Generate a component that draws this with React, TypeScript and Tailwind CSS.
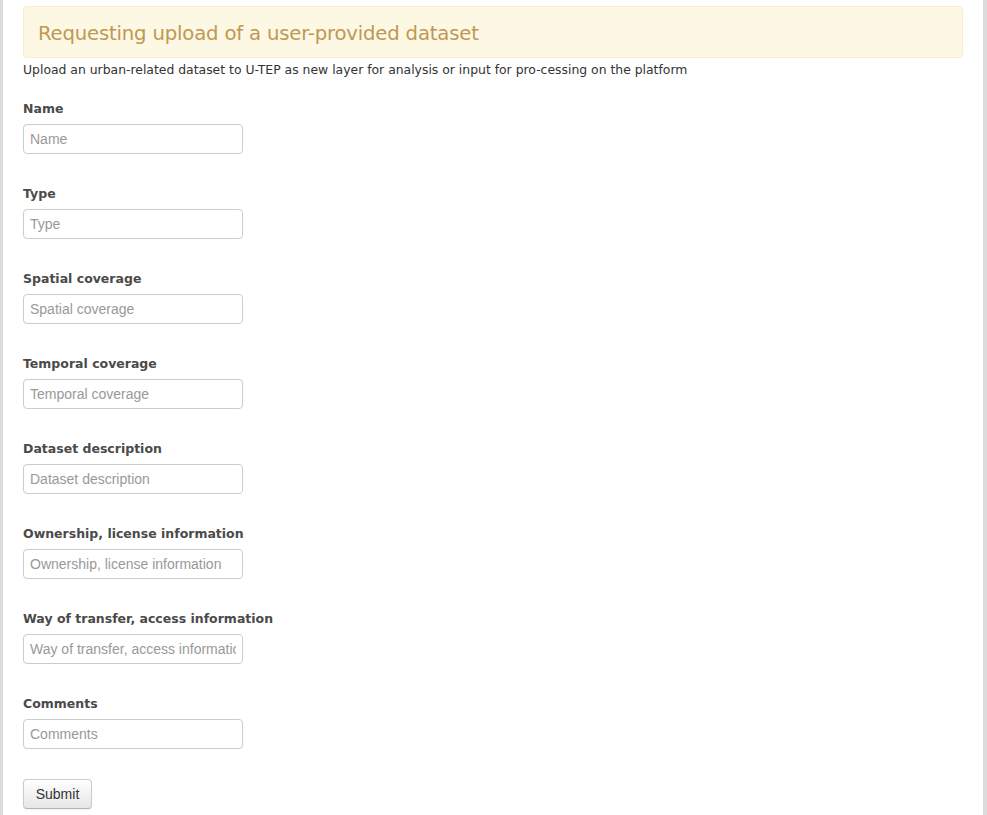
const fields = [
  'Name',
  'Type',
  'Spatial coverage',
  'Temporal coverage',
  'Dataset description',
  'Ownership, license information',
  'Way of transfer, access information',
  'Comments',
];

export default function App() {
  return (
    <div className="min-h-[815px] bg-[#dcdcdc] pl-[3px] pr-[4px]">
      <div className="min-h-[815px] bg-white px-5 pt-[6px] font-['DejaVu_Sans',sans-serif]">
        <div className="h-[52px] rounded border border-[#faebcc] bg-[#fcf8e3] px-[14px] pt-[3px] flex items-center">
          <h2 className="text-[19.7px] text-[#c09853] tracking-[-0.2px]">
            Requesting upload of a user-provided dataset
          </h2>
        </div>
        <p className="mt-[3px] text-[12.4px] leading-[18px] text-[#333]">
          Upload an urban-related dataset to U-TEP as new layer for analysis or input for pro-cessing on the platform
        </p>

        <form className="mt-[19px] flex flex-col gap-[29px]" onSubmit={(e) => e.preventDefault()}>
          {fields.map((f) => (
            <div key={f} className="flex flex-col gap-[5px]">
              <label className="text-[12.5px] leading-[21px] font-bold text-[#4a4a4a]">{f}</label>
              <input
                type="text"
                placeholder={f}
                className="h-[30px] w-[220px] rounded border border-[#ccc] bg-white px-[6px] font-['Liberation_Sans',Arial,sans-serif] text-[14px] text-[#555] placeholder:text-[#999] outline-none"
              />
            </div>
          ))}
          <div className="mt-px">
            <button
              type="submit"
              className="h-[30px] w-[69px] rounded border border-[#ccc] border-b-[#b3b3b3] bg-gradient-to-b from-white to-[#e6e6e6] font-['Liberation_Sans',Arial,sans-serif] text-[14px] text-[#333] shadow-[0_1px_2px_rgba(0,0,0,0.05)]"
            >
              Submit
            </button>
          </div>
        </form>
      </div>
    </div>
  );
}
